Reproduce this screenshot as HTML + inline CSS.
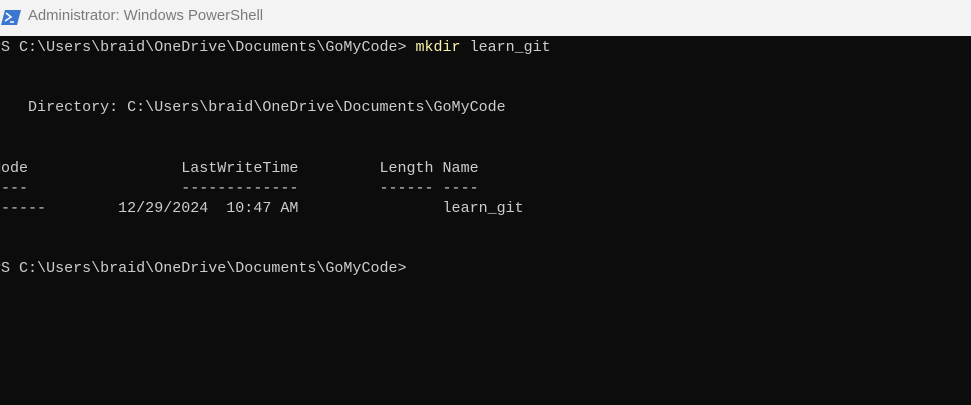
<!DOCTYPE html>
<html><head><style>
html,body{margin:0;padding:0;width:971px;height:405px;overflow:hidden;background:#0c0c0c}
.title{position:absolute;left:0;top:0;width:971px;height:36px;background:#f3f3f3;}
.title span{position:absolute;left:28px;top:8px;font-family:"Liberation Sans",sans-serif;font-size:14.85px;color:#7b7b7b}
.term{position:absolute;left:-8px;top:37px;margin:0;font-family:"Liberation Mono",monospace;font-size:15.02px;line-height:20.1px;color:#cccccc;white-space:pre}
.y{color:#f9f1a5}
</style></head><body>
<div class="title">
<svg style="position:absolute;left:1px;top:9px" width="20" height="17" viewBox="0 0 20 17"><path d="M4 1H20L16 16H0Z" fill="#3a78d0"/><path d="M5 4L10 8L4 12" stroke="#fff" stroke-width="1.6" fill="none"/><path d="M9 13H13" stroke="#fff" stroke-width="1.5"/></svg>
<span>Administrator: Windows PowerShell</span></div>
<pre class="term">PS C:\Users\braid\OneDrive\Documents\GoMyCode&gt; <span class="y">mkdir</span> learn_git


    Directory: C:\Users\braid\OneDrive\Documents\GoMyCode


Mode                 LastWriteTime         Length Name
----                 -------------         ------ ----
d-----        12/29/2024  10:47 AM                learn_git


PS C:\Users\braid\OneDrive\Documents\GoMyCode&gt;</pre>
</body></html>
